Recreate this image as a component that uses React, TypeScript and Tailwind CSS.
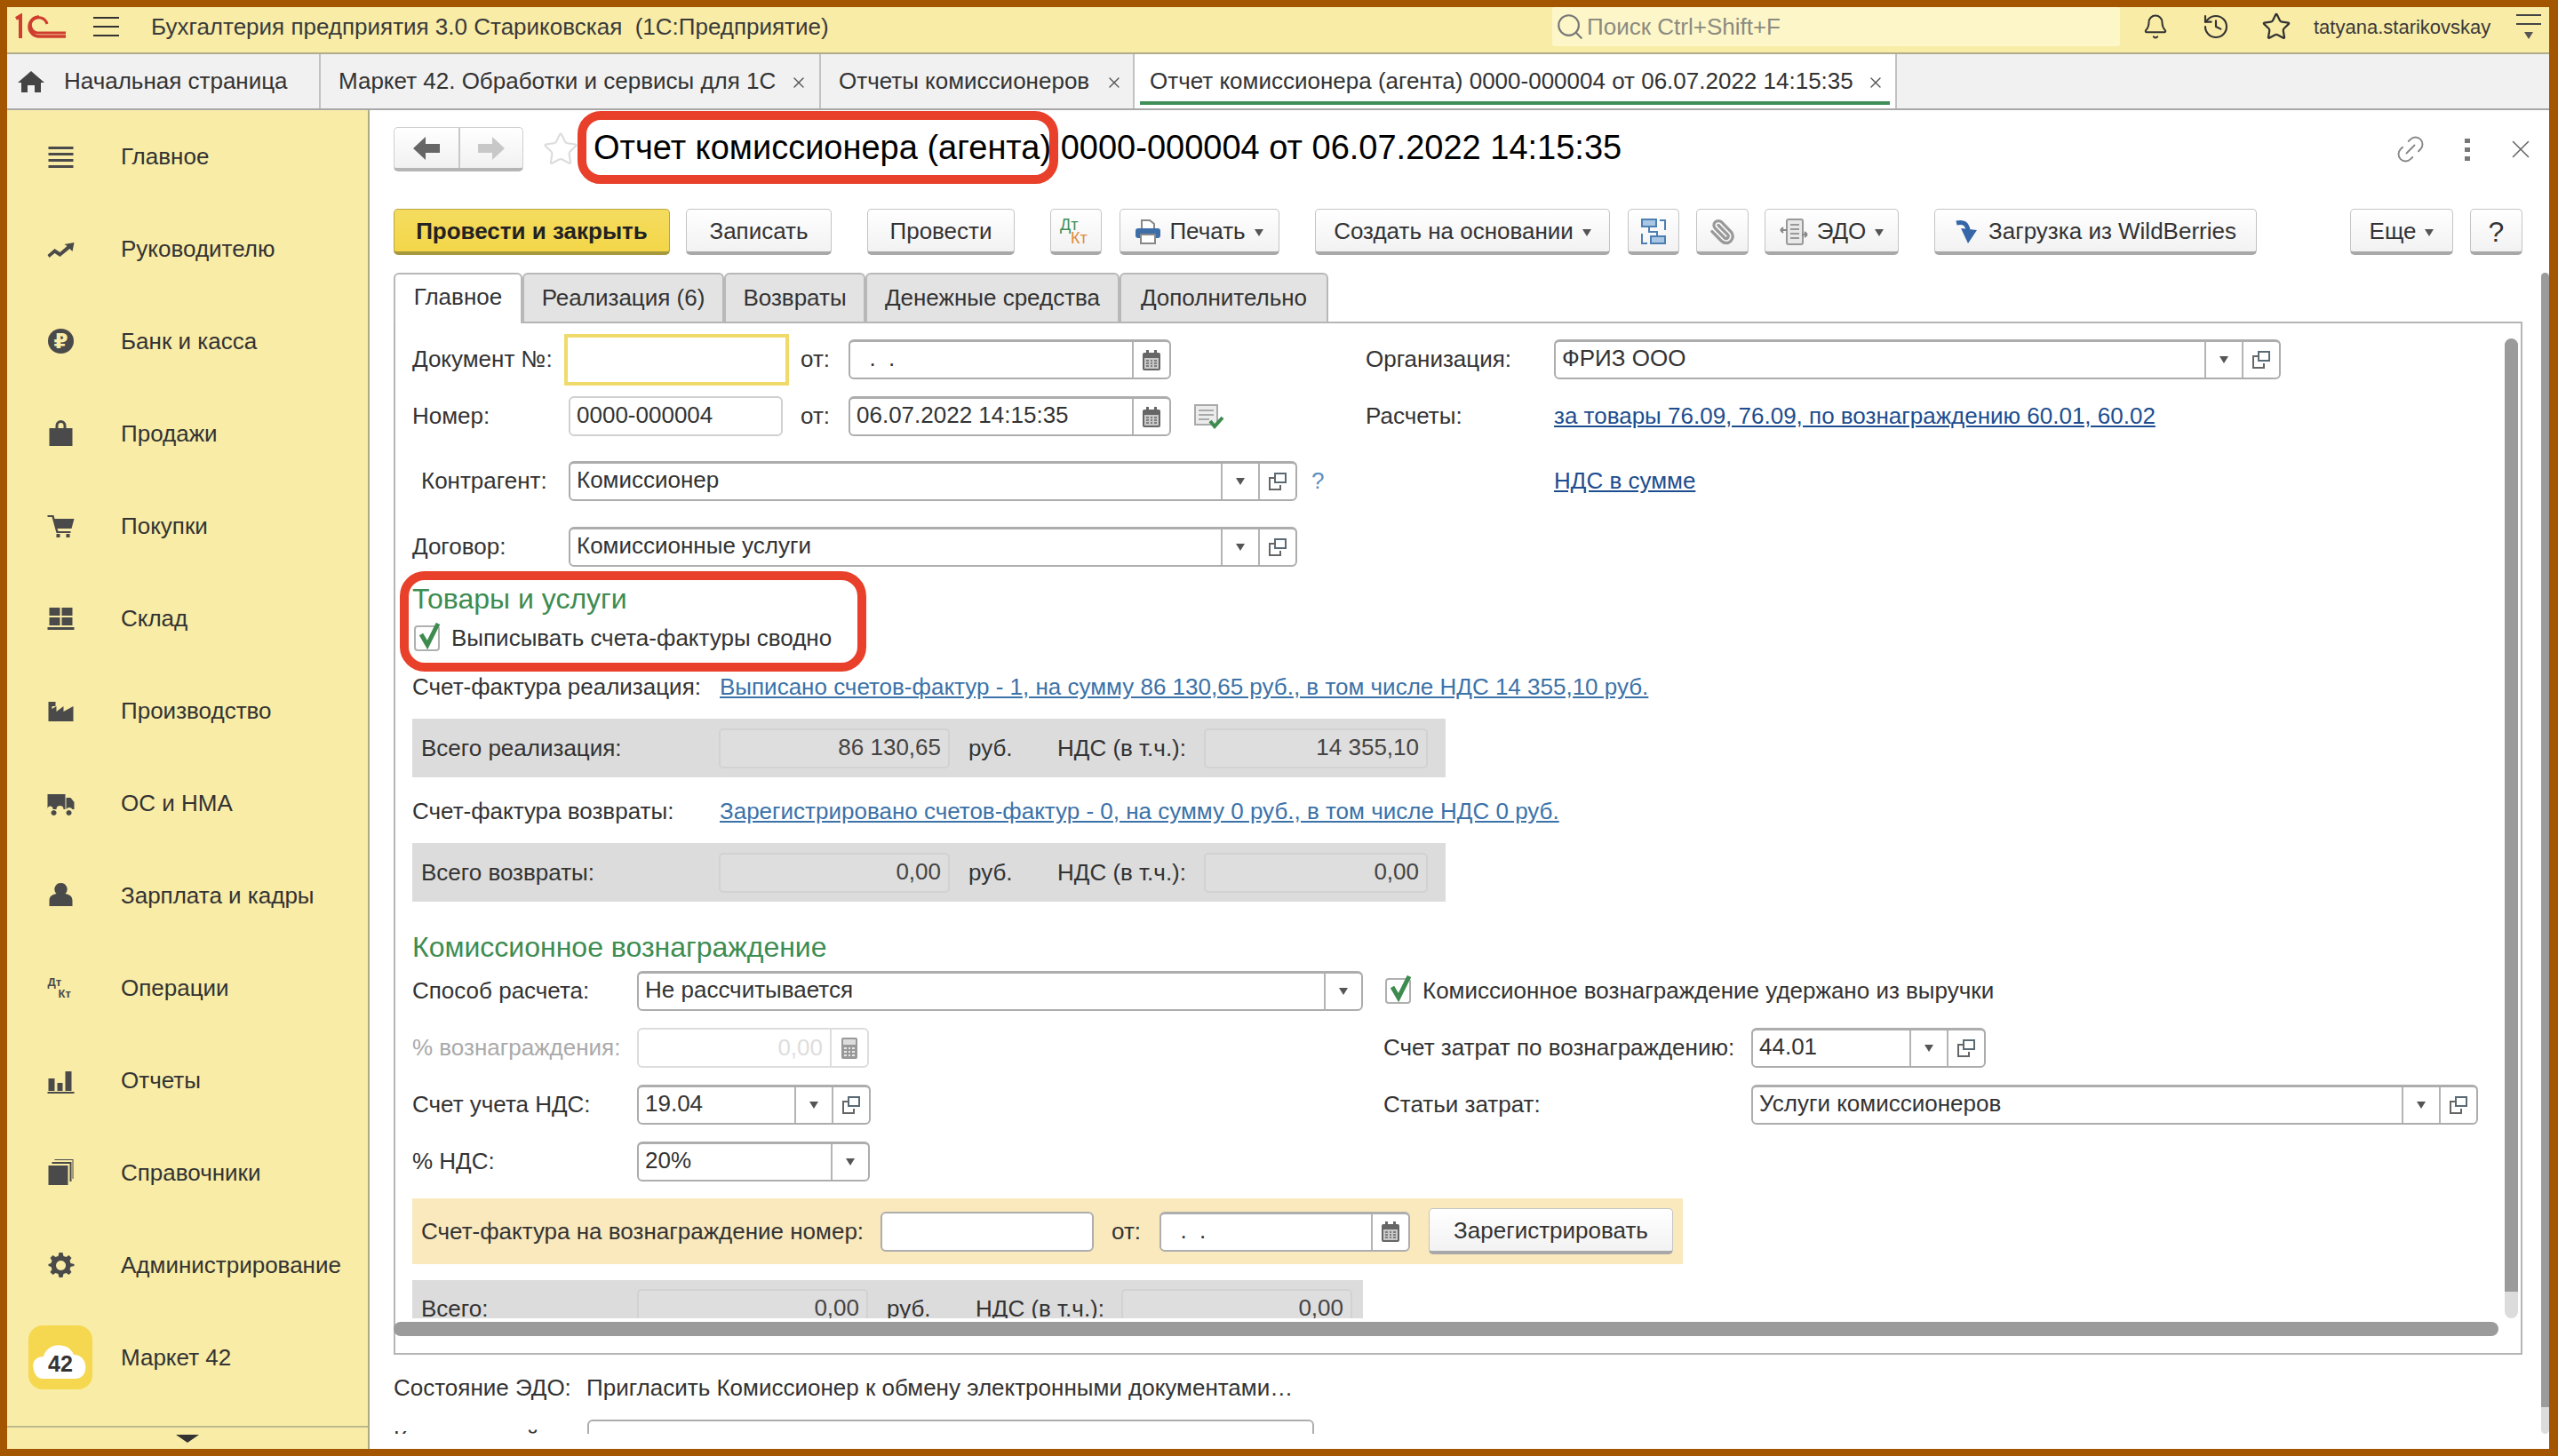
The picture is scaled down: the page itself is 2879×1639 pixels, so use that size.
import React from 'react';
import { Bell, History, Star, Search, Paperclip, Link2, X } from 'lucide-react';

const Tri = ({ className = '' }: { className?: string }) => (
  <svg width="10" height="8" viewBox="0 0 10 8" className={className}>
    <path d="M0 0h10L5 8z" fill="#555" />
  </svg>
);

const OpenIcon = () => (
  <svg width="20" height="20" viewBox="0 0 20 20" fill="none" stroke="#666" strokeWidth="2">
    <rect x="7" y="1" width="12" height="10" stroke="#5a6a75" />
    <path d="M7 6H1v13h12v-5" />
  </svg>
);

const CalIcon = () => (
  <svg width="20" height="23" viewBox="0 0 20 23">
    <rect x="0" y="3" width="20" height="20" rx="2" fill="#666" />
    <rect x="4" y="0" width="3" height="6" fill="#666" />
    <rect x="13" y="0" width="3" height="6" fill="#666" />
    <rect x="2" y="9" width="16" height="12" fill="#c9c9c9" />
    <path d="M4 12h3M9 12h2M13 12h3M4 15h3M9 15h2M13 15h3M4 18h3M9 18h2M13 18h3" stroke="#666" strokeWidth="1.5" />
  </svg>
);

const Seg = ({ children }: { children: React.ReactNode }) => (
  <div className="flex w-[42px] shrink-0 items-center justify-center border-l-2 border-[#b4b4b4]">{children}</div>
);

function Field({ className, children, drop, open, cal }: { className: string; children?: React.ReactNode; drop?: boolean; open?: boolean; cal?: boolean }) {
  return (
    <div className={`flex h-[45px] shrink-0 rounded-[6px] border-2 border-t-[3px] border-[#adadad] bg-white ${className}`}>
      <div className="flex-1 truncate whitespace-pre pl-[7px] leading-[37px] text-[#333]">{children}</div>
      {drop && <Seg><Tri /></Seg>}
      {open && <Seg><OpenIcon /></Seg>}
      {cal && <Seg><CalIcon /></Seg>}
    </div>
  );
}

const ReadOnly = ({ className, value }: { className: string; value: string }) => (
  <div className={`h-[45px] shrink-0 rounded-[5px] border-2 border-[#d2d2d2] bg-[#dedede] pr-[8px] text-right leading-[38px] text-[#444] ${className}`}>{value}</div>
);

function Btn({ className, children, arrow, primary }: { className: string; children: React.ReactNode; arrow?: boolean; primary?: boolean }) {
  const skin = primary
    ? 'border-[#b9a640] border-b-[#a6983c] bg-gradient-to-b from-[#f5dc5f] to-[#f3d648] font-bold text-[#222]'
    : 'border-[#c4c4c4] border-b-[#a8a8a8] bg-gradient-to-b from-white to-[#f2f2f2] text-[#333]';
  return (
    <div className={`flex h-[52px] shrink-0 items-center justify-center gap-[10px] rounded-[5px] border border-b-[4px] pt-[2px] ${skin} ${className}`}>
      {children}
      {arrow && <Tri className="mt-[3px]" />}
    </div>
  );
}

const Check = () => (
  <div className="relative h-[29px] w-[29px] shrink-0 rounded-[4px] border-2 border-[#b0b0b0] bg-white">
    <svg width="28" height="30" viewBox="0 0 28 30" className="absolute -top-[5px] left-[1px]">
      <path d="M5 13l7 12L24 1" fill="none" stroke="#3d8b4f" strokeWidth="5" />
    </svg>
  </div>
);

const icons: Record<string, React.ReactNode> = {
  main: <path d="M1 4h28v3H1zM1 11h28v3H1zM1 18h28v3H1zM1 25h28v3H1z" />,
  boss: <path d="M0 22l8-7 6 4 8-7-3-2 11-2-2 10-3-3-11 9-6-4-6 5z" />,
  bank: (
    <>
      <ellipse cx="15" cy="15" rx="14.5" ry="14" />
      <text x="15" y="23" textAnchor="middle" fontSize="23" fontWeight="700" fill="#f9eca6" fontFamily="'DejaVu Sans',sans-serif">₽</text>
    </>
  ),
  sale: <path d="M2 9h7V6a6 6 0 0 1 12 0v3h7v20H2zM12 9h6V6a3 3 0 0 0-6 0z" fillRule="evenodd" />,
  buy: <path d="M0 3h7l1 4h22l-3 11H11l1 3h14v2H10L5 5H0zM10 24h4v4h-4zM21 24h4v4h-4z" />,
  store: <path d="M2 3h12v9H2zM16 3h12v9H16zM2 14h12v9H2zM16 14h12v9H16zM0 25h30v3H0z" />,
  prod: <path d="M1 27V5h8v5H5v3l5-3v6l8-6v6l11-6v17z" />,
  truck: <path d="M0 5h20v17h-2a4 4 0 0 0-8 0H6a3 3 0 0 0-6-1zM21 9h5l4 5v8h-2a4 4 0 0 0-7 0zM7 23a3 3 0 1 0 .1 0M24 23a3 3 0 1 0 .1 0" />,
  user: <path d="M15 1a7 7 0 0 1 5 12c5 1 8 3 8 8v6H2v-6c0-5 3-7 8-8a7 7 0 0 1 5-12z" />,
  ops: (
    <>
      <text x="0" y="13" fontSize="13" fontWeight="700" fontFamily="'Liberation Sans',sans-serif">Дт</text>
      <text x="12" y="26" fontSize="13" fontWeight="700" fontFamily="'Liberation Sans',sans-serif">Кт</text>
    </>
  ),
  rep: <path d="M1 13h7v14H1zM11 18h6v9h-6zM20 5h7v22h-7zM0 28h30v2H0z" />,
  ref: <path d="M1 7h22v22H1zM5 3h22v22h-2V5H5zM8 0h21v22h-1V1H8z" />,
  admin: <path d="M13 1h4l1 4 3 1 3-2 3 3-2 3 1 3 4 1v2l-4 1-1 3 2 3-3 3-3-2-3 1-1 4h-4l-1-4-3-1-3 2-3-3 2-3-1-3-3-1v-2l3-1 1-3-2-3 3-3 3 2 3-1zM15 10a5.500 5.500 0 1 0 .1 0z" fillRule="evenodd" />,
};

const nav: [string, string][] = [
  ['main', 'Главное'],
  ['boss', 'Руководителю'],
  ['bank', 'Банк и касса'],
  ['sale', 'Продажи'],
  ['buy', 'Покупки'],
  ['store', 'Склад'],
  ['prod', 'Производство'],
  ['truck', 'ОС и НМА'],
  ['user', 'Зарплата и кадры'],
  ['ops', 'Операции'],
  ['rep', 'Отчеты'],
  ['ref', 'Справочники'],
  ['admin', 'Администрирование'],
];

function Sidebar() {
  return (
    <div className="relative w-[408px] shrink-0 border-r-2 border-[#aeaa82] bg-[#f9eca6]">
      {nav.map(([k, label]) => (
        <div key={k} className="flex h-[104px] items-center">
          <svg width="31" height="30" viewBox="0 0 30 30" fill="#4a4a4a" className="ml-[45px]">{icons[k]}</svg>
          <span className="ml-[52px] text-[#333]">{label}</span>
        </div>
      ))}
      <div className="flex h-[104px] items-center">
        <div className="ml-[24px] h-[72px] w-[72px] rounded-[16px] bg-[#f5d84f]">
          <svg width="72" height="72" viewBox="0 0 72 72">
            <path d="M6 50c-3-9 3-15 11-15 2-9 12-15 22-12 6 1 10 5 12 10 9 0 15 8 13 17-1 7-6 10-12 10H16c-5 0-9-4-10-10z" fill="#fff" />
            <text x="36" y="52" textAnchor="middle" fontSize="25" fontWeight="700" fill="#333" fontFamily="'Liberation Sans',sans-serif">42</text>
          </svg>
        </div>
        <span className="ml-[32px] text-[#333]">Маркет 42</span>
      </div>
      <div className="mt-[25px] flex h-[26px] justify-center border-t-2 border-[#bdb98f] pt-[8px]">
        <svg width="26" height="9" viewBox="0 0 26 9"><path d="M0 0h26L13 9z" fill="#333" /></svg>
      </div>
    </div>
  );
}

function TopBar() {
  return (
    <div className="flex h-[53px] shrink-0 border-b-2 border-[#b0ad88] bg-[#f9eca6] text-[#3a3a3a]">
      <svg width="58" height="30" viewBox="0 0 58 30" fill="none" stroke="#cf3d2e" className="ml-[9px] mt-[7px]">
        <path d="M1 6l5-3v25" strokeWidth="4" />
        <path d="M27 4a11 11 0 1 0 0 22h30" strokeWidth="3.500" />
        <path d="M36 12a10 10 0 0 0-17-4 9 9 0 0 0 6 14h32" strokeWidth="3" />
      </svg>
      <div className="ml-[30px] mt-[11px] flex h-[22px] w-[29px] flex-col justify-between">
        <div className="h-[2px] bg-[#333]" />
        <div className="h-[2px] bg-[#333]" />
        <div className="h-[2px] bg-[#333]" />
      </div>
      <div className="ml-[36px] whitespace-pre leading-[44px]">Бухгалтерия предприятия 3.0 Стариковская  (1С:Предприятие)</div>
      <div className="ml-auto flex h-[44px] w-[639px] items-center rounded-[3px] bg-[#fdf6c8] pl-[3px] text-[#8b8b80]">
        <Search size={34} strokeWidth={1.5} className="text-[#777]" />
        <span className="ml-[2px]">Поиск Ctrl+Shift+F</span>
      </div>
      <div className="flex h-[44px] items-center">
        <Bell size={30} strokeWidth={1.6} className="ml-[25px] text-[#333]" />
        <History size={32} strokeWidth={1.6} className="ml-[37px] text-[#333]" />
        <Star size={34} strokeWidth={1.6} className="ml-[35px] text-[#333]" />
        <span className="ml-[25px] w-[200px] whitespace-nowrap text-[22px]">tatyana.starikovskay</span>
        <div className="ml-[28px] mr-[9px] flex w-[28px] flex-col items-center gap-[8px]">
          <div className="h-[2px] w-full bg-[#444]" />
          <div className="h-[2px] w-full bg-[#444]" />
          <Tri />
        </div>
      </div>
    </div>
  );
}

function TabBar() {
  return (
    <div className="flex h-[63px] shrink-0 border-b-2 border-[#a8a8a8] bg-[#f1f1f1] text-[#333]">
      <div className="flex w-[353px] items-center border-r-2 border-[#c2c2c2]">
        <svg width="30" height="24" viewBox="0 0 30 24" fill="#444" className="ml-[12px]">
          <path d="M15 0l15 13h-4v11h-7v-8h-8v8H4V13H0z" />
        </svg>
        <span className="ml-[22px]">Начальная страница</span>
      </div>
      <div className="flex w-[563px] items-center border-r-2 border-[#c2c2c2] pl-[20px]">
        <span className="w-[508px]">Маркет 42. Обработки и сервисы для 1С</span>
        <X size={20} strokeWidth={1.6} className="mt-[3px] text-[#555]" />
      </div>
      <div className="flex w-[353px] items-center border-r-2 border-[#c2c2c2] pl-[20px]">
        <span className="w-[300px]">Отчеты комиссионеров</span>
        <X size={20} strokeWidth={1.6} className="mt-[3px] text-[#555]" />
      </div>
      <div className="relative flex w-[858px] items-center border-r-2 border-[#c2c2c2] bg-white pl-[17px]">
        <span className="w-[807px] whitespace-nowrap">Отчет комиссионера (агента) 0000-000004 от 06.07.2022 14:15:35</span>
        <X size={20} strokeWidth={1.6} className="mt-[3px] text-[#555]" />
        <div className="absolute bottom-[4px] left-[6px] right-[6px] h-[4px] bg-[#3f8f57]" />
      </div>
    </div>
  );
}

function TitleRow() {
  return (
    <div className="flex h-[50px] items-center">
      <div className="flex h-[50px] w-[146px] rounded-[5px] border border-b-[4px] border-[#cfcfcf] border-b-[#b5b5b5] bg-gradient-to-b from-white to-[#f1f1f1]">
        <div className="flex w-[74px] items-center justify-center border-r-2 border-[#c8c8c8]">
          <svg width="30" height="26" viewBox="0 0 30 26"><path d="M14 0v8h16v10H14v8L0 13z" fill="#666" /></svg>
        </div>
        <div className="flex flex-1 items-center justify-center">
          <svg width="30" height="26" viewBox="0 0 30 26"><path d="M16 0v8H0v10h16v8l14-13z" fill="#c8c8c8" /></svg>
        </div>
      </div>
      <Star size={42} strokeWidth={1.2} className="ml-[21px] text-[#dcdcdc]" />
      <div className="relative ml-[16px] h-[50px] whitespace-nowrap text-[38px] leading-[47px] text-black">
        Отчет комиссионера (агента) 0000-000004 от 06.07.2022 14:15:35
        <div className="absolute -left-[18px] -top-[18px] h-[82px] w-[541px] rounded-[26px] border-[10px] border-[#e8402a]" />
      </div>
      <Link2 size={38} strokeWidth={1.2} className="ml-auto -rotate-45 text-[#888]" />
      <div className="ml-[42px] flex w-[6px] flex-col gap-[5px]">
        <div className="h-[5px] bg-[#777]" />
        <div className="h-[5px] bg-[#777]" />
        <div className="h-[5px] bg-[#777]" />
      </div>
      <X size={34} strokeWidth={1.1} className="-mr-[15px] ml-[40px] text-[#666]" />
    </div>
  );
}

function Toolbar() {
  return (
    <div className="mt-[42px] flex">
      <Btn primary className="w-[311px]">Провести и закрыть</Btn>
      <Btn className="ml-[18px] w-[164px]">Записать</Btn>
      <Btn className="ml-[40px] w-[166px]">Провести</Btn>
      <Btn className="ml-[40px] w-[58px] !gap-0">
        <div className="w-[36px] text-[18px] leading-[15px]">
          <div className="text-[#3f8f57]">Дт</div>
          <div className="pl-[12px] text-[#e08a3c]">Кт</div>
        </div>
      </Btn>
      <Btn arrow className="ml-[20px] w-[180px]">
        <svg width="28" height="28" viewBox="0 0 28 28">
          <path d="M7 11V1h9l5 4v6z" fill="#fff" stroke="#888" strokeWidth="2" />
          <rect x="0" y="10" width="28" height="11" rx="3" fill="#3d6ea8" />
          <rect x="6" y="17" width="16" height="10" fill="#fff" stroke="#888" strokeWidth="2" />
        </svg>
        Печать
      </Btn>
      <Btn arrow className="ml-[40px] w-[332px]">Создать на основании</Btn>
      <Btn className="ml-[20px] w-[58px]">
        <svg width="30" height="30" viewBox="0 0 30 30" fill="#a9c6e4" stroke="#4d7fb3" strokeWidth="2">
          <rect x="2" y="1" width="16" height="8" />
          <rect x="12" y="20" width="16" height="8" />
          <path d="M10 9v6h9v5M22 2h6v11M8 28H2V17" fill="none" />
        </svg>
      </Btn>
      <Btn className="ml-[19px] w-[59px]">
        <Paperclip size={30} strokeWidth={2.6} className="scale-x-[-1] text-[#999]" />
      </Btn>
      <Btn arrow className="ml-[18px] w-[151px]">
        <svg width="32" height="30" viewBox="0 0 32 30" fill="none" stroke="#999" strokeWidth="2">
          <rect x="8" y="1" width="18" height="28" rx="2" fill="#e8e8e8" />
          <path d="M12 7h10M12 12h10M12 17h10M12 22h10" />
          <path d="M8 13H1M1 13l3-3M1 13l3 3M25 18h6M31 18l-3-3M31 18l-3 3" stroke="#888" />
        </svg>
        ЭДО
      </Btn>
      <Btn className="ml-[40px] w-[363px]">
        <svg width="28" height="28" viewBox="0 0 28 28" fill="none">
          <path d="M2 4c8-2 12 1 13 8" stroke="#3566a8" strokeWidth="5" />
          <path d="M7 10l18 2-10 15z" fill="#3566a8" />
        </svg>
        Загрузка из WildBerries
      </Btn>
      <Btn arrow className="ml-[105px] w-[116px]">Еще</Btn>
      <Btn className="ml-[19px] w-[59px] text-[32px]">?</Btn>
    </div>
  );
}

function DocTabs() {
  const other = 'flex h-[55px] items-center justify-center rounded-t-[6px] border-2 border-b-0 border-[#b8b8b8] bg-[#e3e3e3] text-[#333]';
  return (
    <div className="relative z-10 mt-[20px] -mb-[2px] flex h-[57px]">
      <div className="flex h-[57px] w-[145px] items-center justify-center rounded-t-[6px] border-2 border-b-0 border-[#b8b8b8] bg-white pb-[4px] text-[#333]">Главное</div>
      <div className={`${other} w-[227px]`}>Реализация (6)</div>
      <div className={`${other} w-[159px]`}>Возвраты</div>
      <div className={`${other} w-[286px]`}>Денежные средства</div>
      <div className={`${other} w-[235px]`}>Дополнительно</div>
    </div>
  );
}

const Label = ({ className = '', children }: { className?: string; children: React.ReactNode }) => (
  <div className={`shrink-0 whitespace-nowrap text-[#333] ${className}`}>{children}</div>
);

const Row = ({ className = '', children }: { className?: string; children: React.ReactNode }) => (
  <div className={`flex h-[45px] items-center ${className}`}>{children}</div>
);

function Totals({ label, a, b }: { label: string; a: string; b: string }) {
  return (
    <div className="mt-[16px] flex h-[66px] w-[1163px] items-center bg-[#dcdcdc]">
      <Label className="w-[345px] pl-[10px]">{label}</Label>
      <ReadOnly className="w-[260px]" value={a} />
      <Label className="ml-[21px] w-[100px]">руб.</Label>
      <Label className="w-[165px]">НДС (в т.ч.):</Label>
      <ReadOnly className="w-[252px]" value={b} />
    </div>
  );
}

function Form() {
  return (
    <div className="h-[1120px] overflow-hidden pl-[19px]">
      <div className="mt-[18px] flex">
        <div className="w-[1073px] shrink-0">
          <Row>
            <Label className="w-[171px]">Документ №:</Label>
            <div className="h-[58px] w-[253px] shrink-0 border-[4px] border-[#f0da6c] bg-white" />
            <Label className="ml-[13px] w-[54px]">от:</Label>
            <Field cal className="w-[363px]">{'  .  .'}</Field>
          </Row>
          <Row className="mt-[19px]">
            <Label className="w-[176px]">Номер:</Label>
            <div className="h-[45px] w-[241px] shrink-0 rounded-[6px] border-2 border-[#d0d0d0] pl-[7px] leading-[39px] text-[#333]">0000-000004</div>
            <Label className="ml-[20px] w-[54px]">от:</Label>
            <Field cal className="w-[363px]">06.07.2022 14:15:35</Field>
            <svg width="34" height="28" viewBox="0 0 34 28" className="ml-[26px]">
              <rect x="1" y="1" width="25" height="22" fill="#ececec" stroke="#aaa" strokeWidth="2" />
              <path d="M5 7h17M5 12h17M5 17h12" stroke="#aaa" strokeWidth="2" />
              <path d="M18 19l5 6 9-10" fill="none" stroke="#3d8b4f" strokeWidth="4" />
            </svg>
          </Row>
          <Row className="mt-[28px]">
            <Label className="w-[176px] pl-[10px]">Контрагент:</Label>
            <Field drop open className="w-[820px]">Комиссионер</Field>
            <span className="ml-[16px] text-[#5a8fc0]">?</span>
          </Row>
          <Row className="mt-[29px]">
            <Label className="w-[176px]">Договор:</Label>
            <Field drop open className="w-[820px]">Комиссионные услуги</Field>
          </Row>
        </div>
        <div>
          <Row>
            <Label className="w-[212px]">Организация:</Label>
            <Field drop open className="w-[818px]">ФРИЗ ООО</Field>
          </Row>
          <Row className="mt-[19px]">
            <Label className="w-[212px]">Расчеты:</Label>
            <span className="whitespace-nowrap text-[#1d4d8f] underline underline-offset-2">за товары 76.09, 76.09, по вознаграждению 60.01, 60.02</span>
          </Row>
          <Row className="mt-[28px]">
            <span className="ml-[212px] whitespace-nowrap text-[#1d4d8f] underline underline-offset-2">НДС в сумме</span>
          </Row>
        </div>
      </div>

      {/* Товары и услуги */}
      <div className="relative mt-[17px] h-[40px] text-[32px] leading-[38px] text-[#3d8c52]">
        Товары и услуги
        <div className="absolute -left-[14px] -top-[12px] h-[113px] w-[525px] rounded-[28px] border-[10px] border-[#e8402a]" />
      </div>
      <div className="mt-[8px] flex h-[30px] items-center pl-[2px]">
        <Check />
        <Label className="ml-[13px]">Выписывать счета-фактуры сводно</Label>
      </div>
      <div className="mt-[20px] flex h-[40px] items-center">
        <Label className="w-[346px]">Счет-фактура реализация:</Label>
        <span className="whitespace-nowrap text-[#3b72a8] underline underline-offset-2">Выписано счетов-фактур - 1, на сумму 86 130,65 руб., в том числе НДС 14 355,10 руб.</span>
      </div>
      <Totals label="Всего реализация:" a="86 130,65" b="14 355,10" />
      <div className="mt-[18px] flex h-[40px] items-center">
        <Label className="w-[346px]">Счет-фактура возвраты:</Label>
        <span className="whitespace-nowrap text-[#3b72a8] underline underline-offset-2">Зарегистрировано счетов-фактур - 0, на сумму 0 руб., в том числе НДС 0 руб.</span>
      </div>
      <Totals label="Всего возвраты:" a="0,00" b="0,00" />

      {/* Комиссионное вознаграждение */}
      <div className="mt-[32px] h-[40px] text-[32px] leading-[38px] text-[#3d8c52]">Комиссионное вознаграждение</div>
      <div className="mt-[6px] flex">
        <div className="w-[1093px] shrink-0">
          <Row>
            <Label className="w-[253px]">Способ расчета:</Label>
            <Field drop className="w-[817px]">Не рассчитывается</Field>
          </Row>
          <Row className="mt-[19px]">
            <Label className="w-[253px] !text-[#aaa]">% вознаграждения:</Label>
            <div className="flex h-[45px] w-[261px] rounded-[6px] border-2 border-[#ddd]">
              <div className="flex-1 pr-[8px] text-right leading-[40px] text-[#ddd]">0,00</div>
              <div className="flex w-[42px] items-center justify-center border-l-2 border-[#ddd]">
                <svg width="18" height="24" viewBox="0 0 18 24">
                  <rect width="18" height="24" rx="2" fill="#999" />
                  <rect x="2" y="2" width="14" height="6" fill="#ddd" />
                  <path d="M3 12h3M8 12h2M12 12h3M3 16h3M8 16h2M12 16h3M3 20h3M8 20h2M12 20h3" stroke="#e8e8e8" strokeWidth="2" />
                </svg>
              </div>
            </div>
          </Row>
          <Row className="mt-[19px]">
            <Label className="w-[253px]">Счет учета НДС:</Label>
            <Field drop open className="w-[263px]">19.04</Field>
          </Row>
          <Row className="mt-[19px]">
            <Label className="w-[253px]">% НДС:</Label>
            <Field drop className="w-[262px]">20%</Field>
          </Row>
        </div>
        <div>
          <Row className="pl-[2px]">
            <Check />
            <Label className="ml-[13px]">Комиссионное вознаграждение удержано из выручки</Label>
          </Row>
          <Row className="mt-[19px]">
            <Label className="w-[414px]">Счет затрат по вознаграждению:</Label>
            <Field drop open className="w-[264px]">44.01</Field>
          </Row>
          <Row className="mt-[19px]">
            <Label className="w-[414px]">Статьи затрат:</Label>
            <Field drop open className="w-[818px]">Услуги комиссионеров</Field>
          </Row>
        </div>
      </div>

      <div className="mt-[19px] flex h-[74px] w-[1430px] items-center bg-[#f9e9bd]">
        <Label className="w-[527px] pl-[10px]">Счет-фактура на вознаграждение номер:</Label>
        <div className="h-[45px] w-[240px] shrink-0 rounded-[6px] border-2 border-[#adadad] bg-white" />
        <Label className="ml-[20px] w-[54px]">от:</Label>
        <Field cal className="w-[282px]">{'  .  .'}</Field>
        <Btn className="ml-[21px] w-[275px]">Зарегистрировать</Btn>
      </div>

      <div className="mt-[18px] flex h-[66px] w-[1070px] items-start bg-[#dcdcdc] pt-[10px]">
        <Label className="w-[253px] pl-[10px] leading-[45px]">Всего:</Label>
        <ReadOnly className="w-[260px]" value="0,00" />
        <Label className="ml-[21px] w-[100px] leading-[45px]">руб.</Label>
        <Label className="w-[164px] leading-[45px]">НДС (в т.ч.):</Label>
        <ReadOnly className="w-[260px]" value="0,00" />
      </div>
    </div>
  );
}

export default function App() {
  return (
    <div className="flex h-[1639px] w-[2879px] flex-col overflow-hidden border-b-[8px] border-l-[8px] border-r-[10px] border-t-[8px] border-[#a45500] bg-white font-['Liberation_Sans',Arial,sans-serif] text-[26px]">
      <TopBar />
      <TabBar />
      <div className="flex min-h-0 flex-1">
        <Sidebar />
        <div className="relative flex-1 overflow-hidden bg-white pl-[27px] pr-[30px] pt-[19px]">
          <TitleRow />
          <Toolbar />
          <DocTabs />
          <div className="relative h-[1163px] border-2 border-[#b5b5b5]">
            <Form />
            {/* полосы прокрутки поверх панели */}
            <div className="absolute right-[3px] top-[17px] h-[1081px] w-[15px] rounded-full bg-[#9b9b9b]" />
            <div className="absolute right-[3px] top-[1090px] h-[30px] w-[15px] rounded-b-full bg-[#dcdcdc]" />
            <div className="absolute bottom-[19px] -left-[2px] h-[16px] w-[2369px] rounded-full bg-[#9b9b9b]" />
          </div>
          <div className="mt-[17px] flex h-[40px] items-center">
            <Label className="w-[217px]">Состояние ЭДО:</Label>
            <Label>Пригласить Комиссионер к обмену электронными документами…</Label>
          </div>
          <div className="mt-[16px] h-[16px] overflow-hidden">
            <div className="flex h-[45px] items-center">
              <Label className="w-[218px]">Комментарий:</Label>
              <div className="h-[45px] w-[818px] rounded-[6px] border-2 border-[#adadad]" />
            </div>
          </div>
          <div className="absolute right-0 top-[183px] h-[1277px] w-[9px] rounded-t-full bg-[#9b9b9b]" />
          <div className="absolute right-0 top-[1460px] h-[30px] w-[9px] rounded-b-full bg-[#dcdcdc]" />
        </div>
      </div>
    </div>
  );
}
